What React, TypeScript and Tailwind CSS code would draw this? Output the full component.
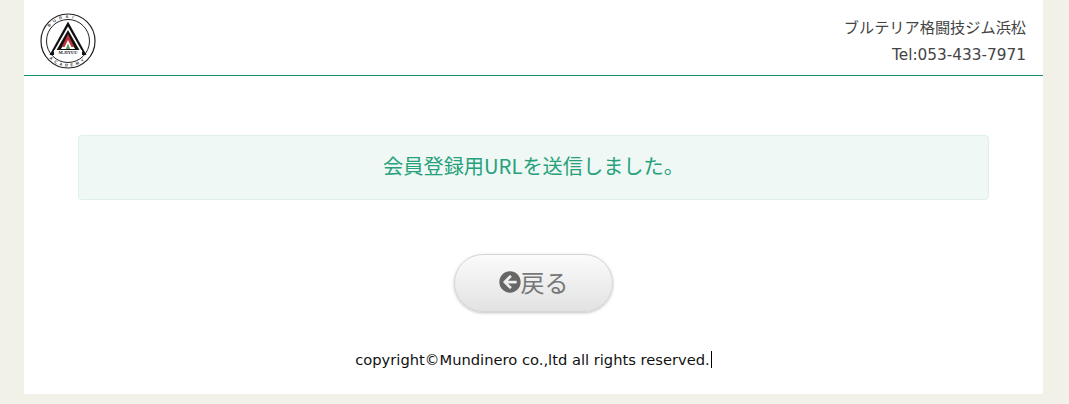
import React from "react";

function Logo() {
  return (
    <svg width="56" height="56" viewBox="0 0 56 56">
      <defs>
        <path id="ringTop" d="M5 28 A23 23 0 0 1 51 28" />
        <path id="ringBottom" d="M2.500 28 A25.500 25.500 0 0 0 53.500 28" />
      </defs>
      <circle cx="28" cy="28" r="27" fill="#fff" stroke="#222" strokeWidth="1.200" />
      <circle cx="28" cy="28" r="21.500" fill="#fff" stroke="#222" strokeWidth="1" />
      <text fontSize="4" fontWeight="700" fill="#333" letterSpacing="3.500" fontFamily="'Liberation Sans',sans-serif"><textPath href="#ringTop" startOffset="20%">BURAI</textPath></text>
      <text fontSize="4" fontWeight="700" fill="#333" letterSpacing="3" fontFamily="'Liberation Sans',sans-serif"><textPath href="#ringBottom" startOffset="24%">ACADEMY</textPath></text>
      <path d="M28 8.500 L46.500 42 H9.500 Z" fill="#111" />
      <path d="M28 13.500 L42.500 39 H13.500 Z" fill="#fff" />
      <path d="M28 17 L40 38 H16 Z" fill="#111" />
      <path d="M28 23 L35 36 H21 Z" fill="#fff" />
      <path d="M28 21 L34 34 L31.500 34 L28 27 L24.500 34 L22 34 Z" fill="#c0313a" />
      <path d="M25.800 36 L28 30.500 L30.200 36 Z" fill="#5c9a62" />
      <rect x="14" y="37" width="28" height="5" fill="#fff" />
      <text x="28" y="41.300" textAnchor="middle" fontSize="4.500" fontWeight="700" fill="#222" fontFamily="'Liberation Serif',serif">M.JIYUU</text>
    </svg>
  );
}

export default function App() {
  return (
    <div className="h-[404px] bg-[#f1f1e8] pl-[24px] pr-[26px] font-['DejaVu_Sans','Noto_Sans_CJK_JP',sans-serif] overflow-hidden">
      <div className="h-[394px] bg-white flex flex-col">
        <header className="h-[76px] border-b border-[#178a6c] flex justify-between pl-[16px] pr-[17px]">
          <div className="pt-[13px]"><Logo /></div>
          <div className="text-right text-[#444] leading-[26px] pt-[13px] font-['Noto_Sans_CJK_JP',sans-serif]">
            <p className="text-[15.200px] h-[26px]">ブルテリア格闘技ジム浜松</p>
            <p className="font-['DejaVu_Sans',sans-serif] text-[15.300px] h-[26px] mt-[3px]">Tel:053-433-7971</p>
          </div>
        </header>
        <div className="mx-[54px] mt-[59px] h-[65px] pb-[2px] border border-[#dff0ea] rounded-[4px] bg-[#eff8f5] flex items-center justify-center text-[20.200px] text-[#26a17b] font-['Noto_Sans_CJK_JP',sans-serif]">
          会員登録用URLを送信しました。
        </div>
        <div className="flex justify-center mt-[54px]">
          <button className="w-[159px] h-[58px] pb-[2px] rounded-[30px] border border-[#d5d5d5] bg-gradient-to-b from-[#fbfbfb] to-[#e2e2e2] shadow-[0_1px_3px_rgba(0,0,0,0.25)] text-[24px] text-[#777] font-['Noto_Sans_CJK_JP',sans-serif] flex items-center justify-center">
            <svg width="22" height="22" viewBox="0 0 512 512" fill="#666"><path d="M256 504C119 504 8 393 8 256S119 8 256 8s248 111 248 248-111 248-248 248zm28.900-143.600L209.400 288H392c13.300 0 24-10.700 24-24v-16c0-13.300-10.700-24-24-24H209.400l75.500-72.400c9.700-9.300 9.900-24.800.4-34.300l-11-10.900c-9.400-9.400-24.600-9.400-33.900 0L107.700 239c-9.400 9.400-9.400 24.600 0 33.900l132.700 132.700c9.400 9.400 24.600 9.400 33.900 0l11-10.900c9.500-9.500 9.300-25-.4-34.300z"/></svg>
            <span>戻る</span>
          </button>
        </div>
        <p className="mt-[37px] text-center text-[14.700px] text-[#111] leading-[22px]">
          <span className="border-r border-black pr-px">copyright©Mundinero co.,ltd all rights reserved.</span>
        </p>
      </div>
    </div>
  );
}
